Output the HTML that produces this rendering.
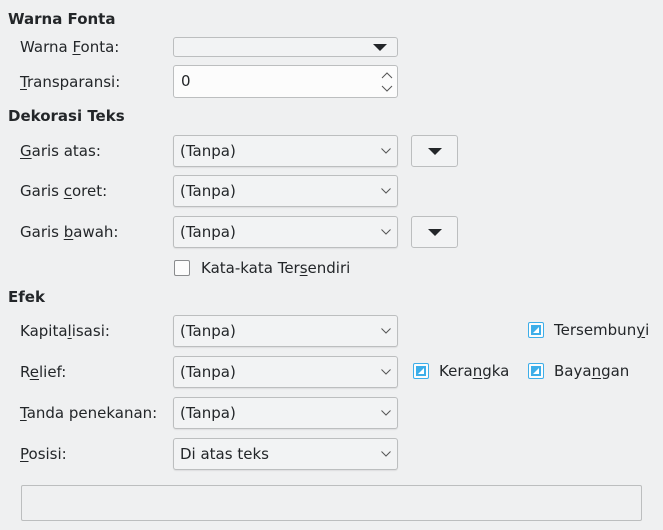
<!DOCTYPE html>
<html><head><meta charset="utf-8"><style>
body{margin:0;width:663px;height:530px;background:#eff0f1;font-family:"DejaVu Sans","Liberation Sans",sans-serif;font-size:15px;color:#232629;position:relative;overflow:hidden}
.a{position:absolute;white-space:nowrap}
.h{font-weight:bold;left:8px}
.l{left:20px}
.cb{position:absolute;left:173px;width:223px;height:30px;border:1px solid #bcbebf;border-radius:3px;background:#f2f3f4;box-shadow:0 1px 1px rgba(0,0,0,.08)}
.cb span{position:absolute;left:6px;top:6px}
.cb svg{position:absolute;right:6px;top:12px}
.btn{position:absolute;left:411px;width:45px;height:30px;border:1px solid #bcbebf;border-radius:3px;background:#f2f3f4}
.tri{position:absolute;width:0;height:0;border-left:7px solid transparent;border-right:7px solid transparent;border-top:7px solid #232629}
.chk{position:absolute;width:14px;height:14px;border:1px solid #3daee9;border-radius:2px;background:#fcfcfc}
.chk b{position:absolute;left:2px;top:2px;width:10px;height:10px;background:#3daee9}
.chk b:after{content:"";position:absolute;left:2px;top:2px;width:6px;height:6px;background:#fff;clip-path:polygon(100% 0,100% 100%,0 100%)}
u{text-decoration:underline;text-underline-offset:2px}
</style></head><body>
<div class="a h" style="top:10px">Warna Fonta</div>
<div class="a l" style="top:38px">Warna <u>F</u>onta:</div>
<div class="a" style="left:173px;top:37px;width:223px;height:18px;border:1px solid #bcbebf;border-radius:3px;background:#f2f3f4"><div class="tri" style="right:10px;top:6px"></div></div>
<div class="a l" style="top:73px"><u>T</u>ransparansi:</div>
<div class="a" style="left:173px;top:65px;width:223px;height:31px;border:1px solid #bcbebf;border-radius:3px;background:#fcfcfc"><span class="a" style="left:7px;top:6px">0</span>
<svg class="a" style="right:4px;top:6px" width="12" height="20"><path d="M1 6 L6 1 L11 6 M1 14 L6 19 L11 14" fill="none" stroke="#555" stroke-width="1"/></svg></div>
<div class="a h" style="top:107px">Dekorasi Teks</div>

<div class="a l" style="top:142px"><u>G</u>aris atas:</div>
<div class="cb" style="top:135px"><span>(Tanpa)</span><svg width="10" height="6"><path d="M0.5 0.5 L5 5 L9.5 0.5" fill="none" stroke="#555"/></svg></div>
<div class="btn" style="top:135px"><div class="tri" style="left:16px;top:12px"></div></div>

<div class="a l" style="top:182px">Garis <u>c</u>oret:</div>
<div class="cb" style="top:175px"><span>(Tanpa)</span><svg width="10" height="6"><path d="M0.5 0.5 L5 5 L9.5 0.5" fill="none" stroke="#555"/></svg></div>

<div class="a l" style="top:223px">Garis <u>b</u>awah:</div>
<div class="cb" style="top:216px"><span>(Tanpa)</span><svg width="10" height="6"><path d="M0.5 0.5 L5 5 L9.5 0.5" fill="none" stroke="#555"/></svg></div>
<div class="btn" style="top:216px"><div class="tri" style="left:16px;top:12px"></div></div>

<div class="chk" style="left:174px;top:260px;border-color:#8a8c8e"></div>
<div class="a" style="left:201px;top:259px">Kata-kata Ter<u>s</u>endiri</div>

<div class="a h" style="top:288px">Efek</div>

<div class="a l" style="top:322px">Kapita<u>l</u>isasi:</div>
<div class="cb" style="top:315px"><span>(Tanpa)</span><svg width="10" height="6"><path d="M0.5 0.5 L5 5 L9.5 0.5" fill="none" stroke="#555"/></svg></div>
<div class="chk" style="left:528px;top:322px"><b></b></div>
<div class="a" style="left:554px;top:321px">Tersembun<u>y</u>i</div>

<div class="a l" style="top:363px">R<u>e</u>lief:</div>
<div class="cb" style="top:356px"><span>(Tanpa)</span><svg width="10" height="6"><path d="M0.5 0.5 L5 5 L9.5 0.5" fill="none" stroke="#555"/></svg></div>
<div class="chk" style="left:413px;top:363px"><b></b></div>
<div class="a" style="left:439px;top:362px">Kera<u>n</u>gka</div>
<div class="chk" style="left:528px;top:363px"><b></b></div>
<div class="a" style="left:554px;top:362px">Baya<u>n</u>gan</div>

<div class="a l" style="top:404px"><u>T</u>anda penekanan:</div>
<div class="cb" style="top:397px"><span>(Tanpa)</span><svg width="10" height="6"><path d="M0.5 0.5 L5 5 L9.5 0.5" fill="none" stroke="#555"/></svg></div>

<div class="a l" style="top:445px"><u>P</u>osisi:</div>
<div class="cb" style="top:438px"><span>Di atas teks</span><svg width="10" height="6"><path d="M0.5 0.5 L5 5 L9.5 0.5" fill="none" stroke="#555"/></svg></div>

<div class="a" style="left:21px;top:485px;width:619px;height:34px;border:1px solid #bcbebf;border-radius:2px;background:#eff0f1"></div>
</body></html>
